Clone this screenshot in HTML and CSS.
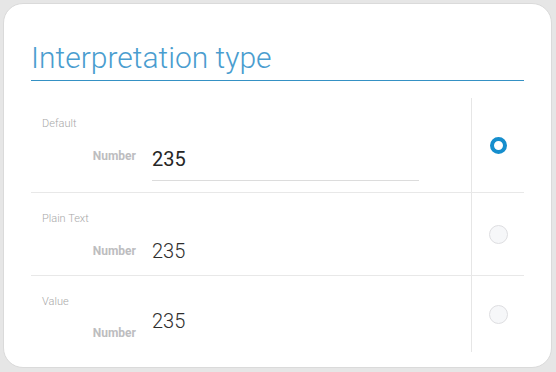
FILE: index.html
```html
<!DOCTYPE html>
<html lang="en">
<head>
<meta charset="UTF-8">
<meta name="viewport" content="width=device-width, initial-scale=1.0">
<title>Interpretation type</title>
<link rel="stylesheet" href="styles.css">
</head>
<body>
<div class="card">
    <h1 class="title">Interpretation type</h1>
    <div class="options">
        <div class="option option-default">
            <div class="option-body">
                <div class="option-name">Default</div>
                <div class="field">
                    <span class="field-label">Number</span>
                    <span class="field-value field-input">235</span>
                </div>
            </div>
            <div class="option-radio">
                <span class="radio checked"></span>
            </div>
        </div>
        <div class="option option-plain">
            <div class="option-body">
                <div class="option-name">Plain Text</div>
                <div class="field">
                    <span class="field-label">Number</span>
                    <span class="field-value">235</span>
                </div>
            </div>
            <div class="option-radio">
                <span class="radio"></span>
            </div>
        </div>
        <div class="option option-value">
            <div class="option-body">
                <div class="option-name">Value</div>
                <div class="field">
                    <span class="field-label">Number</span>
                    <span class="field-value">235</span>
                </div>
            </div>
            <div class="option-radio">
                <span class="radio"></span>
            </div>
        </div>
    </div>
</div>
</body>
</html>
```

FILE: styles.css
```css
body {
    margin: 0;
    padding: 3px;
    font-family: Roboto, "Liberation Sans", sans-serif;
    background-color: #e6e6e6;
}

.card {
    box-sizing: border-box;
    width: 549px;
    height: 365px;
    padding: 36px 27px 0 27px;
    background-color: #fff;
    border: 1px solid #dadada;
    border-radius: 20px;
}

.title {
    margin: 0;
    padding-bottom: 4px;
    font-size: 30px;
    font-weight: 300;
    line-height: 36px;
    color: #4a9dcf;
    border-bottom: 1px solid #3591c4;
}

.options {
    margin-top: 17px;
}

.option {
    display: grid;
    grid-template-columns: 1fr 53px;
    border-bottom: 1px solid #e8e8e8;
}

.option:last-child {
    border-bottom: none;
}

.option-body {
    padding: 19px 0 11px 11px;
}

.option-plain .option-body,
.option-value .option-body {
    padding-bottom: 12px;
}

.option-name {
    font-size: 11px;
    font-weight: 300;
    line-height: 13px;
    color: #a8a8a8;
}

.field {
    display: flex;
    align-items: flex-start;
    gap: 16px;
    margin-top: 17px;
}

.option-plain .field {
    align-items: center;
    margin-top: 14px;
}

.option-value .field {
    margin-top: 1px;
}

.field-label {
    width: 94px;
    padding-top: 2px;
    text-align: right;
    font-size: 12px;
    font-weight: 700;
    line-height: 14px;
    color: #bdbdc0;
}

.option-plain .field-label {
    padding-top: 0;
}

.option-value .field-label {
    padding-top: 17px;
}

.field-value {
    font-size: 20px;
    font-weight: 300;
    line-height: 24px;
    color: #2e2e2e;
}

.field-input {
    width: 267px;
    padding-bottom: 9px;
    font-weight: 400;
    color: #262626;
    border-bottom: 1px solid #dcdcdc;
}

.option-radio {
    display: flex;
    align-items: center;
    justify-content: center;
    border-left: 1px solid #e6e6e6;
}

.radio {
    box-sizing: border-box;
    width: 19px;
    height: 19px;
    border: 1.5px solid #dedee1;
    border-radius: 50%;
    background-color: #f6f7f9;
}

.radio.checked {
    width: 17px;
    height: 17px;
    border: 4px solid #168ecd;
    background-color: #fff;
}
```
